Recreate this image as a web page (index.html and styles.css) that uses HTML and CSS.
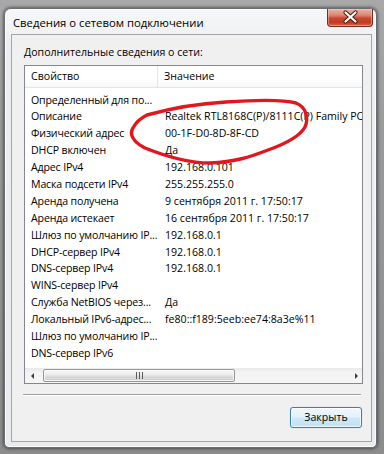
FILE: index.html
```html
<!DOCTYPE html>
<html lang="ru">
<head>
<meta charset="utf-8">
<title>Сведения о сетевом подключении</title>
<link rel="stylesheet" href="styles.css">
</head>
<body>
<div class="window">
  <div class="titlebar">
    <span class="title">Сведения о сетевом подключении</span>
    <div class="close">
      <svg width="46" height="18" viewBox="0 0 46 18">
        <path d="M18.5 4.5 L28.5 13.5 M28.5 4.5 L18.5 13.5" stroke="#4a1a12" stroke-width="4.2" stroke-linecap="round" fill="none"/>
        <path d="M18.5 4.5 L28.5 13.5 M28.5 4.5 L18.5 13.5" stroke="#ffffff" stroke-width="2.2" stroke-linecap="round" fill="none"/>
      </svg>
    </div>
  </div>
  <div class="client">
    <div class="label">Дополнительные сведения о сети:</div>
    <div class="list">
      <div class="header">
        <div class="hcol c1">Свойство</div>
        <div class="hcol c2">Значение</div>
      </div>
      <div class="rows">
        <div class="row"><span class="c1">Определенный для по...</span><span class="c2"></span></div>
        <div class="row"><span class="c1">Описание</span><span class="c2">Realtek RTL8168C(P)/8111C(P) Family PCI-E Gigabit Ethernet NIC (NDIS 6.20)</span></div>
        <div class="row"><span class="c1">Физический адрес</span><span class="c2">00-1F-D0-8D-8F-CD</span></div>
        <div class="row"><span class="c1">DHCP включен</span><span class="c2">Да</span></div>
        <div class="row"><span class="c1">Адрес IPv4</span><span class="c2">192.168.0.101</span></div>
        <div class="row"><span class="c1">Маска подсети IPv4</span><span class="c2">255.255.255.0</span></div>
        <div class="row"><span class="c1">Аренда получена</span><span class="c2">9 сентября 2011 г. 17:50:17</span></div>
        <div class="row"><span class="c1">Аренда истекает</span><span class="c2">16 сентября 2011 г. 17:50:17</span></div>
        <div class="row"><span class="c1">Шлюз по умолчанию IP...</span><span class="c2">192.168.0.1</span></div>
        <div class="row"><span class="c1">DHCP-сервер IPv4</span><span class="c2">192.168.0.1</span></div>
        <div class="row"><span class="c1">DNS-сервер IPv4</span><span class="c2">192.168.0.1</span></div>
        <div class="row"><span class="c1">WINS-сервер IPv4</span><span class="c2"></span></div>
        <div class="row"><span class="c1">Служба NetBIOS через...</span><span class="c2">Да</span></div>
        <div class="row"><span class="c1">Локальный IPv6-адрес...</span><span class="c2">fe80::f189:5eeb:ee74:8a3e%11</span></div>
        <div class="row"><span class="c1">Шлюз по умолчанию IP...</span><span class="c2"></span></div>
        <div class="row"><span class="c1">DNS-сервер IPv6</span><span class="c2"></span></div>
      </div>
      <div class="hscroll">
        <div class="sbtn"><span class="arrow-left"></span></div>
        <div class="track">
          <div class="thumb">
            <svg width="7" height="7" viewBox="0 0 7 7">
              <path d="M0.5 0 V7 M3.5 0 V7 M6.5 0 V7" stroke="#5a5a5a" stroke-width="1"/>
            </svg>
          </div>
        </div>
        <div class="sbtn"><span class="arrow-right"></span></div>
      </div>
    </div>
    <div class="sep"></div>
    <div class="buttons">
      <button class="btn">Закрыть</button>
    </div>
  </div>
</div>
<svg class="annot" width="384" height="454" viewBox="0 0 384 454">
  <path d="M147 115 C165 110 190 104 226 102 C255 100 285 100 296 103 C306 107 309 118 305 127 C300 136 285 144 268 150 C250 157 235 162 210 163 C190 163 165 156 145 148 C133 142 129 134 133 128 C136 122 141 118 147 115" fill="none" stroke="#e3161e" stroke-width="3.4" stroke-linecap="round" stroke-linejoin="round"/>
</svg>
</body>
</html>
```
FILE: styles.css
```css
html, body {
  margin: 0;
  padding: 0;
}
body {
  position: relative;
  width: 384px;
  height: 454px;
  overflow: hidden;
  background: linear-gradient(to bottom, #a8a8a8 0, #9a9a9a 30%, #8c8c8c 100%);
  font-family: "Open Sans", "Noto Sans", sans-serif;
  font-size: 10.6px;
  color: #000;
}
.window {
  box-sizing: border-box;
  margin: 8px 0 0 4px;
  width: 373px;
  height: 440px;
  border: 1px solid #6b6f75;
  border-radius: 7px 7px 5px 5px;
  background: linear-gradient(to bottom, #f6f7f8 0, #eceef0 40px, #e9ebed 100%);
  box-shadow: 0 0 3px 1px rgba(0, 0, 0, 0.45), inset 0 0 0 1px rgba(255, 255, 255, 0.8);
  padding: 0 4px 5px 6px;
  display: flex;
  flex-direction: column;
}
.titlebar {
  height: 25px;
  flex: none;
  display: flex;
  align-items: center;
  justify-content: space-between;
  padding-left: 2px;
}
.title {
  font-size: 11.3px;
  color: #000;
  white-space: nowrap;
  padding-top: 1px;
}
.close {
  align-self: flex-start;
  box-sizing: border-box;
  width: 46px;
  height: 18px;
  margin-right: -1px;
  border: 1px solid #7a2a1e;
  border-top: none;
  border-radius: 0 0 4px 4px;
  background: linear-gradient(to bottom, #eab2a4 0, #dd8a76 35%, #c8472f 55%, #c23a22 80%, #d86a4c 100%);
  box-shadow: inset 0 0 0 1px rgba(255, 210, 200, 0.45);
}
.close svg {
  display: block;
  margin: -1px 0 0 -1px;
}
.client {
  flex: 1;
  box-sizing: border-box;
  border: 1px solid #a3a5a8;
  background: #f0f0f0;
  padding: 10px 9px 0 12px;
  display: flex;
  flex-direction: column;
}
.label {
  line-height: 15px;
  height: 15px;
  white-space: nowrap;
}
.list {
  margin-top: 5px;
  box-sizing: border-box;
  width: 339px;
  height: 319px;
  border: 1px solid #828790;
  background: #fff;
  display: flex;
  flex-direction: column;
  overflow: hidden;
}
.header {
  flex: none;
  height: 22px;
  box-sizing: border-box;
  border-bottom: 1px solid #e5e5e5;
  display: flex;
  background: linear-gradient(to bottom, #ffffff 0, #ffffff 60%, #f7f8f9 100%);
}
.hcol {
  line-height: 21px;
  white-space: nowrap;
}
.hcol.c1 {
  box-sizing: border-box;
  width: 133px;
  padding-left: 6px;
  border-right: 1px solid #e3e5e8;
}
.hcol.c2 {
  padding-left: 6px;
}
.rows {
  flex: 1;
  padding-top: 3.5px;
  overflow: hidden;
}
.row {
  height: 16.9px;
  line-height: 16.9px;
  display: flex;
  white-space: nowrap;
  overflow: hidden;
}
.row .c1 {
  flex: none;
  box-sizing: border-box;
  width: 133px;
  padding-left: 6px;
  letter-spacing: -0.15px;
  overflow: visible;
}
.row .c2 {
  padding-left: 7px;
}
.hscroll {
  flex: none;
  height: 15px;
  display: flex;
  background: linear-gradient(to bottom, #e9e9e9 0, #f3f3f3 30%, #f5f5f5 100%);
}
.sbtn {
  width: 17px;
  flex: none;
  display: flex;
  align-items: center;
  justify-content: center;
}
.arrow-left {
  width: 0;
  height: 0;
  border-top: 3.5px solid transparent;
  border-bottom: 3.5px solid transparent;
  border-right: 3.5px solid #3d3d3d;
  margin-left: -2px;
}
.arrow-right {
  width: 0;
  height: 0;
  border-top: 3.5px solid transparent;
  border-bottom: 3.5px solid transparent;
  border-left: 3.5px solid #3d3d3d;
  margin-left: 6px;
}
.track {
  flex: 1;
  display: flex;
  align-items: center;
}
.thumb {
  box-sizing: border-box;
  width: 192px;
  height: 13px;
  margin-left: 1px;
  border: 1px solid #979797;
  border-radius: 2px;
  background: linear-gradient(to bottom, #f6f6f6 0, #ececec 45%, #dcdcdc 55%, #d2d2d2 100%);
  box-shadow: inset 0 0 0 1px rgba(255, 255, 255, 0.7);
  display: flex;
  align-items: center;
  justify-content: center;
}
.thumb svg {
  display: block;
}
.sep {
  margin: 10px 0 0 -1px;
  width: 338px;
  height: 0;
  border-top: 1px solid #a0a0a0;
  border-bottom: 1px solid #ffffff;
}
.buttons {
  display: flex;
  justify-content: flex-end;
  margin-top: 11px;
}
.btn {
  box-sizing: border-box;
  width: 72px;
  height: 21px;
  margin: 0;
  padding: 0;
  border: 1px solid #3c7fb1;
  border-radius: 3px;
  background: linear-gradient(to bottom, #eef7fc 0, #e3f1fa 48%, #cde9f8 52%, #bfe2f5 100%);
  box-shadow: inset 0 0 0 1px rgba(255, 255, 255, 0.75), 0 0 1px rgba(80, 170, 230, 0.6);
  font-family: "Open Sans", "Noto Sans", sans-serif;
  font-size: 10.6px;
  color: #000;
  line-height: 19px;
}
.annot {
  position: absolute;
  left: 0;
  top: 0;
  pointer-events: none;
}
```
